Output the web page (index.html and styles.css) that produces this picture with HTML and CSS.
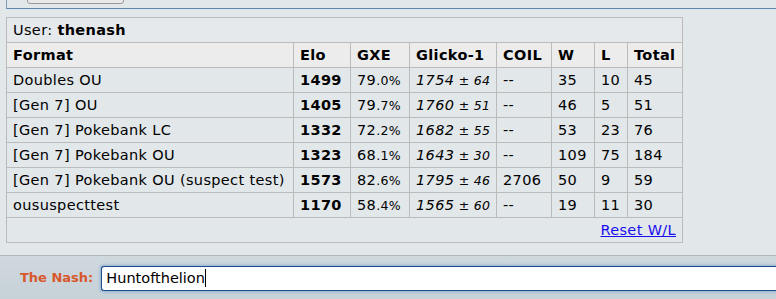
FILE: index.html
```html
<!DOCTYPE html>
<html>
<head>
<meta charset="utf-8">
<link rel="stylesheet" href="styles.css">
</head>
<body>
<div class="page">
  <div class="prevbox"><span class="prevbtn"></span></div>
  <table class="ladder">
    <colgroup>
      <col class="c-format"><col class="c-elo"><col class="c-gxe"><col class="c-glicko"><col class="c-coil"><col class="c-w"><col class="c-l"><col class="c-total">
    </colgroup>
    <tr><td colspan="8" class="user">User: <strong>thenash</strong></td></tr>
    <tr class="head"><th>Format</th><th>Elo</th><th>GXE</th><th>Glicko-1</th><th>COIL</th><th>W</th><th>L</th><th>Total</th></tr>
    <tr><td>Doubles OU</td><td><strong>1499</strong></td><td>79<small>.0%</small></td><td><em>1754<small> ± 64</small></em></td><td>--</td><td>35</td><td>10</td><td>45</td></tr>
    <tr><td>[Gen 7] OU</td><td><strong>1405</strong></td><td>79<small>.7%</small></td><td><em>1760<small> ± 51</small></em></td><td>--</td><td>46</td><td>5</td><td>51</td></tr>
    <tr><td>[Gen 7] Pokebank LC</td><td><strong>1332</strong></td><td>72<small>.2%</small></td><td><em>1682<small> ± 55</small></em></td><td>--</td><td>53</td><td>23</td><td>76</td></tr>
    <tr><td>[Gen 7] Pokebank OU</td><td><strong>1323</strong></td><td>68<small>.1%</small></td><td><em>1643<small> ± 30</small></em></td><td>--</td><td>109</td><td>75</td><td>184</td></tr>
    <tr><td>[Gen 7] Pokebank OU (suspect test)</td><td><strong>1573</strong></td><td>82<small>.6%</small></td><td><em>1795<small> ± 46</small></em></td><td>2706</td><td>50</td><td>9</td><td>59</td></tr>
    <tr><td>oususpecttest</td><td><strong>1170</strong></td><td>58<small>.4%</small></td><td><em>1565<small> ± 60</small></em></td><td>--</td><td>19</td><td>11</td><td>30</td></tr>
    <tr><td colspan="8" class="reset"><a href="#">Reset W/L</a></td></tr>
  </table>
  <div class="chatbar">
    <label class="name">The Nash:</label>
    <div class="input">Huntofthelion<span class="caret"></span></div>
  </div>
</div>
</body>
</html>
```
FILE: styles.css
```css
html, body {
  margin: 0;
  padding: 0;
}
body {
  width: 776px;
  height: 299px;
  overflow: hidden;
  background: #e2e7ea;
  font-family: "DejaVu Sans", Verdana, sans-serif;
  font-size: 14.5px;
  color: #000;
}
.page {
  display: flex;
  flex-direction: column;
  height: 299px;
}
.prevbox {
  margin-left: 6px;
  height: 8px;
  border-left: 1px solid #7f9cbc;
  border-bottom: 1px solid #5f84ad;
  overflow: hidden;
  flex: none;
}
.prevbtn {
  display: block;
  margin-left: 20px;
  margin-top: -10px;
  width: 95px;
  height: 12px;
  border: 1px solid #9a9a9a;
  border-radius: 3px;
  background: #e8e8e8;
}
.ladder {
  margin: 8px 0 0 6px;
  width: 677px;
  table-layout: fixed;
  border-collapse: collapse;
  flex: none;
  letter-spacing: 0.35px;
}
.c-format { width: 287px; }
.c-elo { width: 57px; }
.c-gxe { width: 59px; }
.c-glicko { width: 87px; }
.c-coil { width: 55px; }
.c-w { width: 43px; }
.c-l { width: 33px; }
.c-total { width: 55px; }
.ladder td, .ladder th {
  border: 1px solid #bbbbbb;
  padding: 0 6px;
  text-align: left;
  white-space: nowrap;
  line-height: 18px;
  box-sizing: border-box;
  height: 25px;
}
.ladder th {
  font-weight: bold;
  background: #ececec;
}
.ladder td.user {
  background: #e6e9eb;
}
.ladder small {
  font-size: 12.5px;
}
.ladder em {
  font-style: italic;
}
.ladder td.reset {
  text-align: right;
}
.reset a {
  color: #1a0dee;
  text-decoration: underline;
}
.chatbar {
  margin-top: 12px;
  flex: 1;
  border-top: 1px solid #b4b8bb;
  background: linear-gradient(#cfd8dd, #c6d1d8);
  display: flex;
  align-items: flex-start;
  padding: 10px 0 0 20px;
  gap: 8px;
}
.name {
  color: #d8582c;
  font-weight: bold;
  font-size: 13px;
  line-height: 24px;
}
.input {
  flex: 1;
  height: 23px;
  background: #fff;
  border: 1px solid #1f4f88;
  border-right: none;
  border-radius: 3px 0 0 3px;
  box-shadow: 0 0 3px 1px #8eb1d4;
  padding-left: 4px;
  line-height: 23px;
  font-size: 14.5px;
}
.caret {
  display: inline-block;
  width: 1px;
  height: 18px;
  background: #000;
  vertical-align: -4px;
}
```
